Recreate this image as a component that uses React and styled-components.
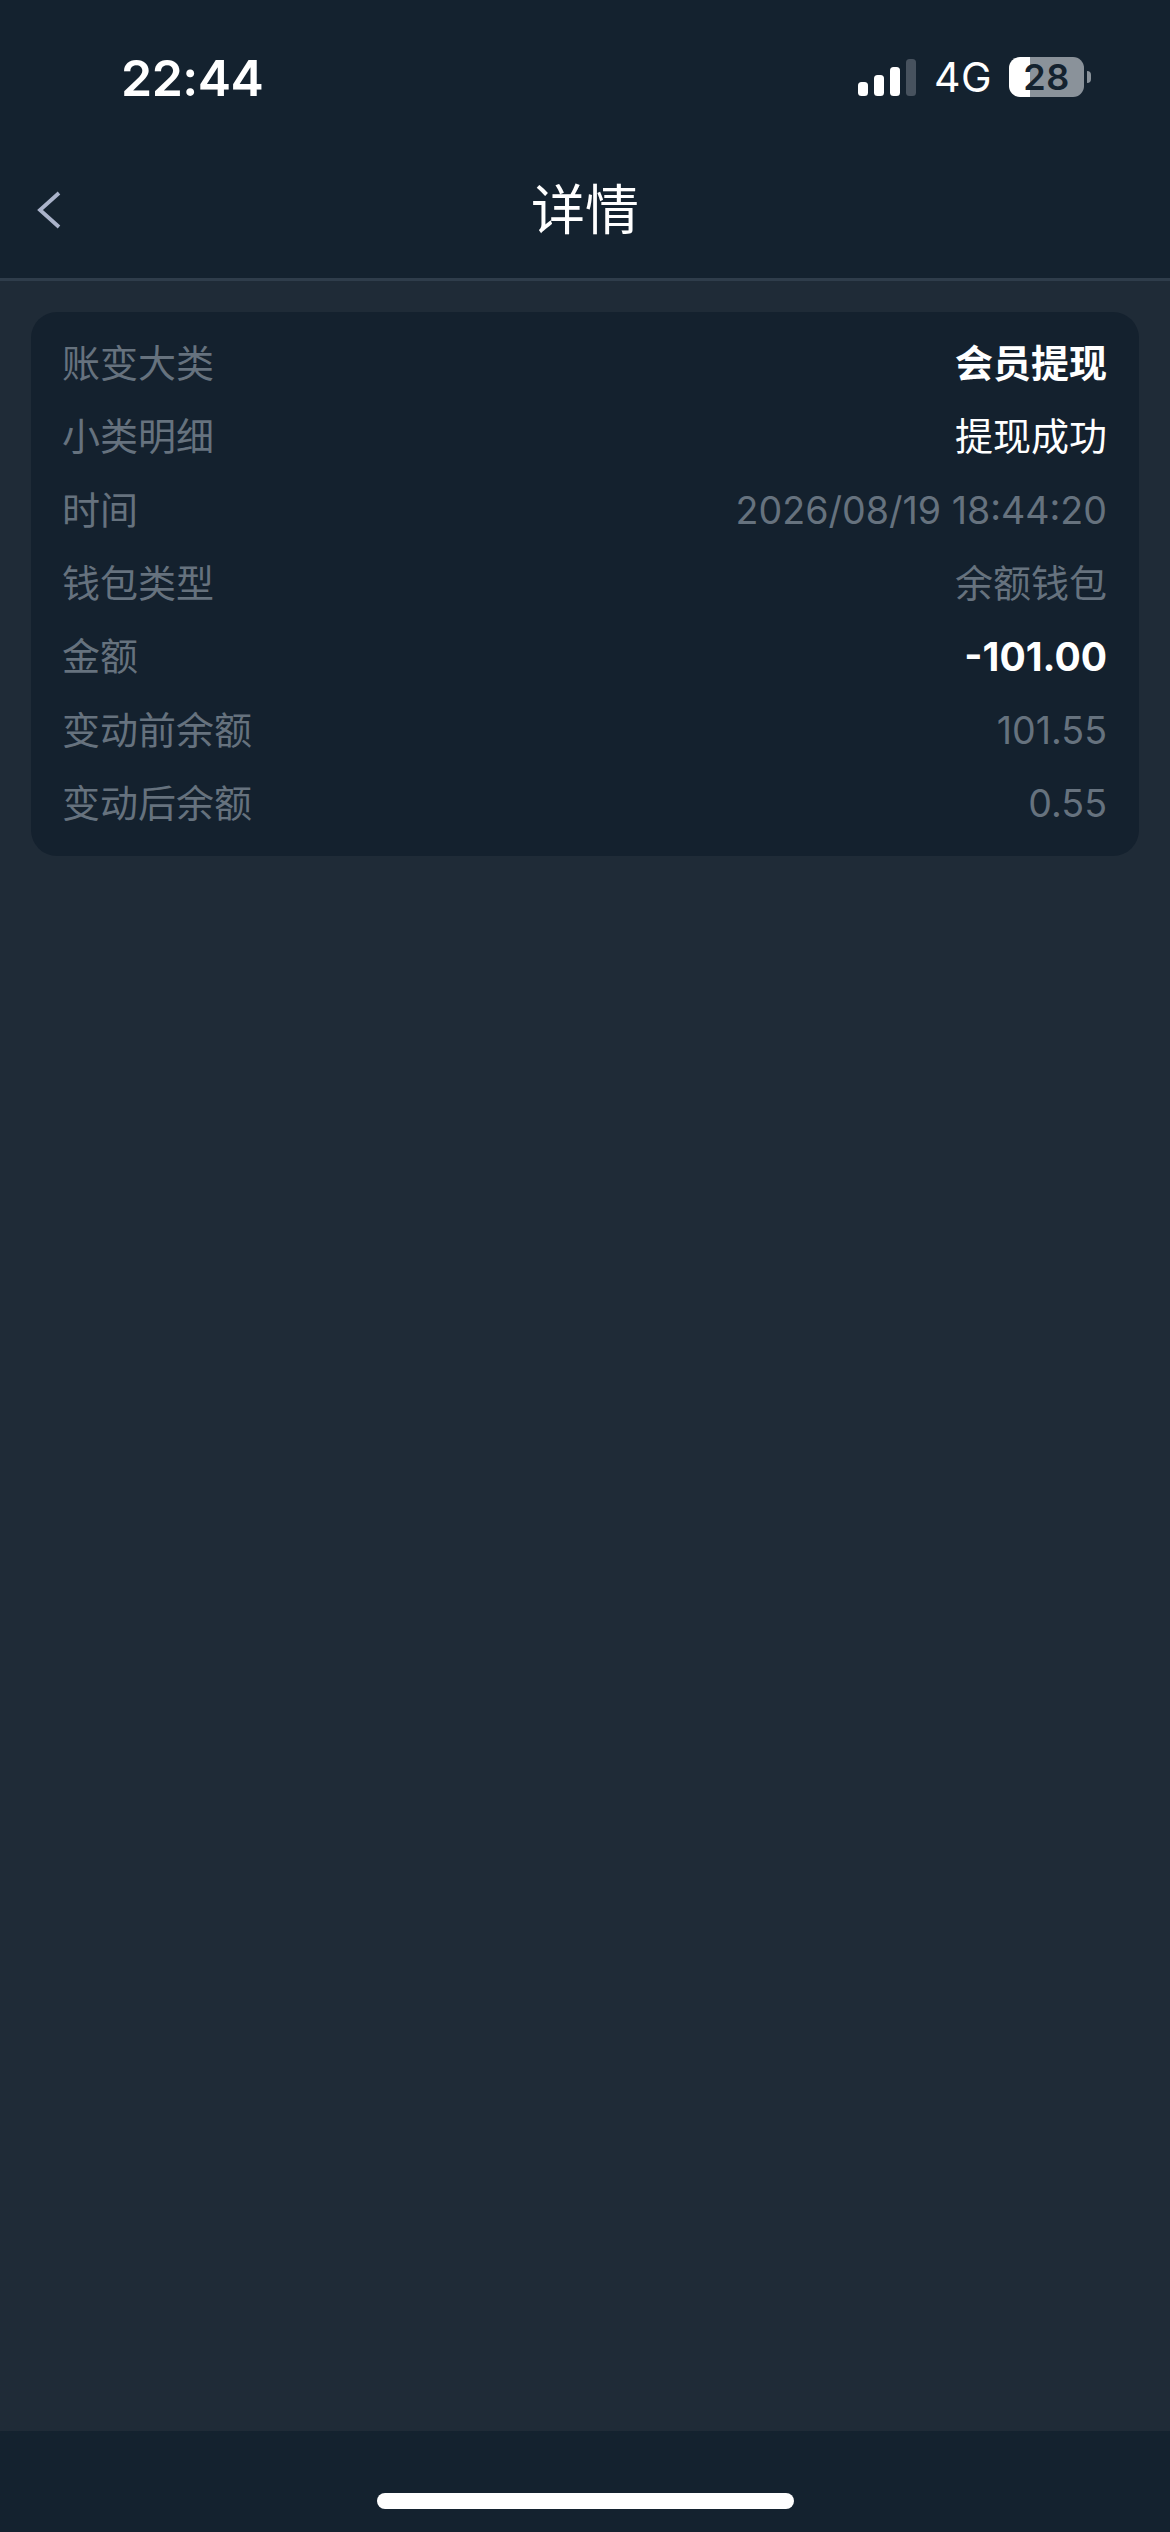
import React from "react";
import styled, { createGlobalStyle } from "styled-components";

const FONT = `Inter, "Noto Sans CJK SC", sans-serif`;
const CJK = `"Noto Sans CJK SC", sans-serif`;

const Global = createGlobalStyle`
  html, body { margin: 0; padding: 0; background: #1f2b37; }
  * { box-sizing: border-box; }
`;

const Page = styled.div`
  width: 1170px;
  height: 2532px;
  display: flex;
  flex-direction: column;
  background: #1f2b37;
  font-family: ${FONT};
  overflow: hidden;
`;

const Header = styled.header`
  height: 281px;
  flex: none;
  background: #14222f;
  border-bottom: 3px solid #2f3d4b;
  display: flex;
  flex-direction: column;
`;

const StatusBar = styled.div`
  height: 156px;
  flex: none;
  display: flex;
  align-items: flex-start;
  justify-content: space-between;
  padding: 49px 86px 0 121px;
`;

const Clock = styled.div`
  font-size: 50px;
  line-height: 58px;
  font-weight: 600;
  color: #fff;
  letter-spacing: -0.5px;
`;

const StatusIcons = styled.div`
  display: flex;
  align-items: center;
  height: 40px;
  margin-top: 8px;
`;

const SignalIcon = styled.svg`
  display: block;
  width: 58px;
  height: 37px;
  margin-top: 1px;
  margin-right: 18px;
`;

const Network = styled.span`
  font-size: 41px;
  line-height: 40px;
  font-weight: 400;
  color: #fff;
  letter-spacing: 0.5px;
  margin-right: 17px;
`;

const Battery = styled.div`
  position: relative;
  width: 75px;
  height: 40px;
  border-radius: 11px;
  background: linear-gradient(90deg, #fff 28%, #8a929a 28%);
  display: flex;
  align-items: center;
  justify-content: center;
  font-size: 36px;
  line-height: 40px;
  font-weight: 600;
  letter-spacing: 0.5px;
  color: #14222f;

  &::after {
    content: "";
    position: absolute;
    left: 78px;
    top: 14px;
    width: 4px;
    height: 12px;
    border-radius: 0 6px 6px 0;
    background: #8a929a;
  }
`;

const Nav = styled.nav`
  flex: 1;
  display: grid;
  grid-template-columns: 120px 1fr 120px;
  align-items: center;
  padding-bottom: 21px;
`;

const BackButton = styled.button`
  appearance: none;
  border: 0;
  background: none;
  padding: 6px 0 0 37px;
  display: flex;
  align-items: center;
`;

const Title = styled.h1`
  margin: 0;
  text-align: center;
  font-family: ${CJK};
  font-size: 54px;
  line-height: 64px;
  font-weight: 400;
  color: #fff;
`;

const Main = styled.main`
  flex: 1;
  padding: 31px;
`;

const Card = styled.section`
  background: #14212e;
  border-radius: 26px;
  padding: 15px 32px 16px 31px;
`;

const Row = styled.div`
  height: 73.3px;
  display: flex;
  align-items: center;
  justify-content: space-between;
  font-size: 38px;
`;

const Label = styled.span`
  color: #66727e;
  font-family: ${CJK};
  padding-bottom: 6px;
`;

const Value = styled.span`
  color: ${(p) => (p.$tone === "muted" ? "#66727e" : "#fff")};
  font-weight: ${(p) => (p.$bold ? 700 : 400)};
  font-size: ${(p) => (p.$cjk ? "38px" : p.$bold ? "39px" : "37.6px")};
  font-family: ${(p) => (p.$cjk ? CJK : FONT)};
  padding-bottom: ${(p) => (p.$cjk ? "6px" : "0")};
`;

const Footer = styled.footer`
  height: 101px;
  flex: none;
  background: #14222f;
  display: flex;
  justify-content: center;
  padding-top: 62px;
`;

const HomeBar = styled.div`
  width: 417px;
  height: 16px;
  border-radius: 8px;
  background: #fff;
`;

const rows = [
  { label: "账变大类", value: "会员提现", tone: "white", bold: true, cjk: true },
  { label: "小类明细", value: "提现成功", tone: "white", cjk: true },
  { label: "时间", value: "2026/08/19 18:44:20", tone: "muted" },
  { label: "钱包类型", value: "余额钱包", tone: "muted", cjk: true },
  { label: "金额", value: "-101.00", tone: "white", bold: true },
  { label: "变动前余额", value: "101.55", tone: "muted" },
  { label: "变动后余额", value: "0.55", tone: "muted" },
];

export default function App() {
  return (
    <Page>
      <Global />
      <Header>
        <StatusBar>
          <Clock>22:44</Clock>
          <StatusIcons>
            <SignalIcon viewBox="0 0 58 37">
              <rect x="0" y="23" width="10" height="14" rx="3.5" fill="#fff" />
              <rect x="16" y="16" width="10" height="21" rx="3.5" fill="#fff" />
              <rect x="32" y="8" width="10" height="29" rx="3.5" fill="#fff" />
              <rect x="48" y="0" width="10" height="37" rx="3.5" fill="#47525e" />
            </SignalIcon>
            <Network>4G</Network>
            <Battery>28</Battery>
          </StatusIcons>
        </StatusBar>
        <Nav>
          <BackButton aria-label="返回">
            <svg width="24" height="38" viewBox="0 0 24 38" fill="none">
              <path d="M22 2 L3 19 L22 36" stroke="#aab3ca" strokeWidth="3.8" />
            </svg>
          </BackButton>
          <Title>详情</Title>
        </Nav>
      </Header>
      <Main>
        <Card>
          {rows.map((r) => (
            <Row key={r.label}>
              <Label>{r.label}</Label>
              <Value $tone={r.tone} $bold={r.bold} $cjk={r.cjk}>{r.value}</Value>
            </Row>
          ))}
        </Card>
      </Main>
      <Footer>
        <HomeBar />
      </Footer>
    </Page>
  );
}
